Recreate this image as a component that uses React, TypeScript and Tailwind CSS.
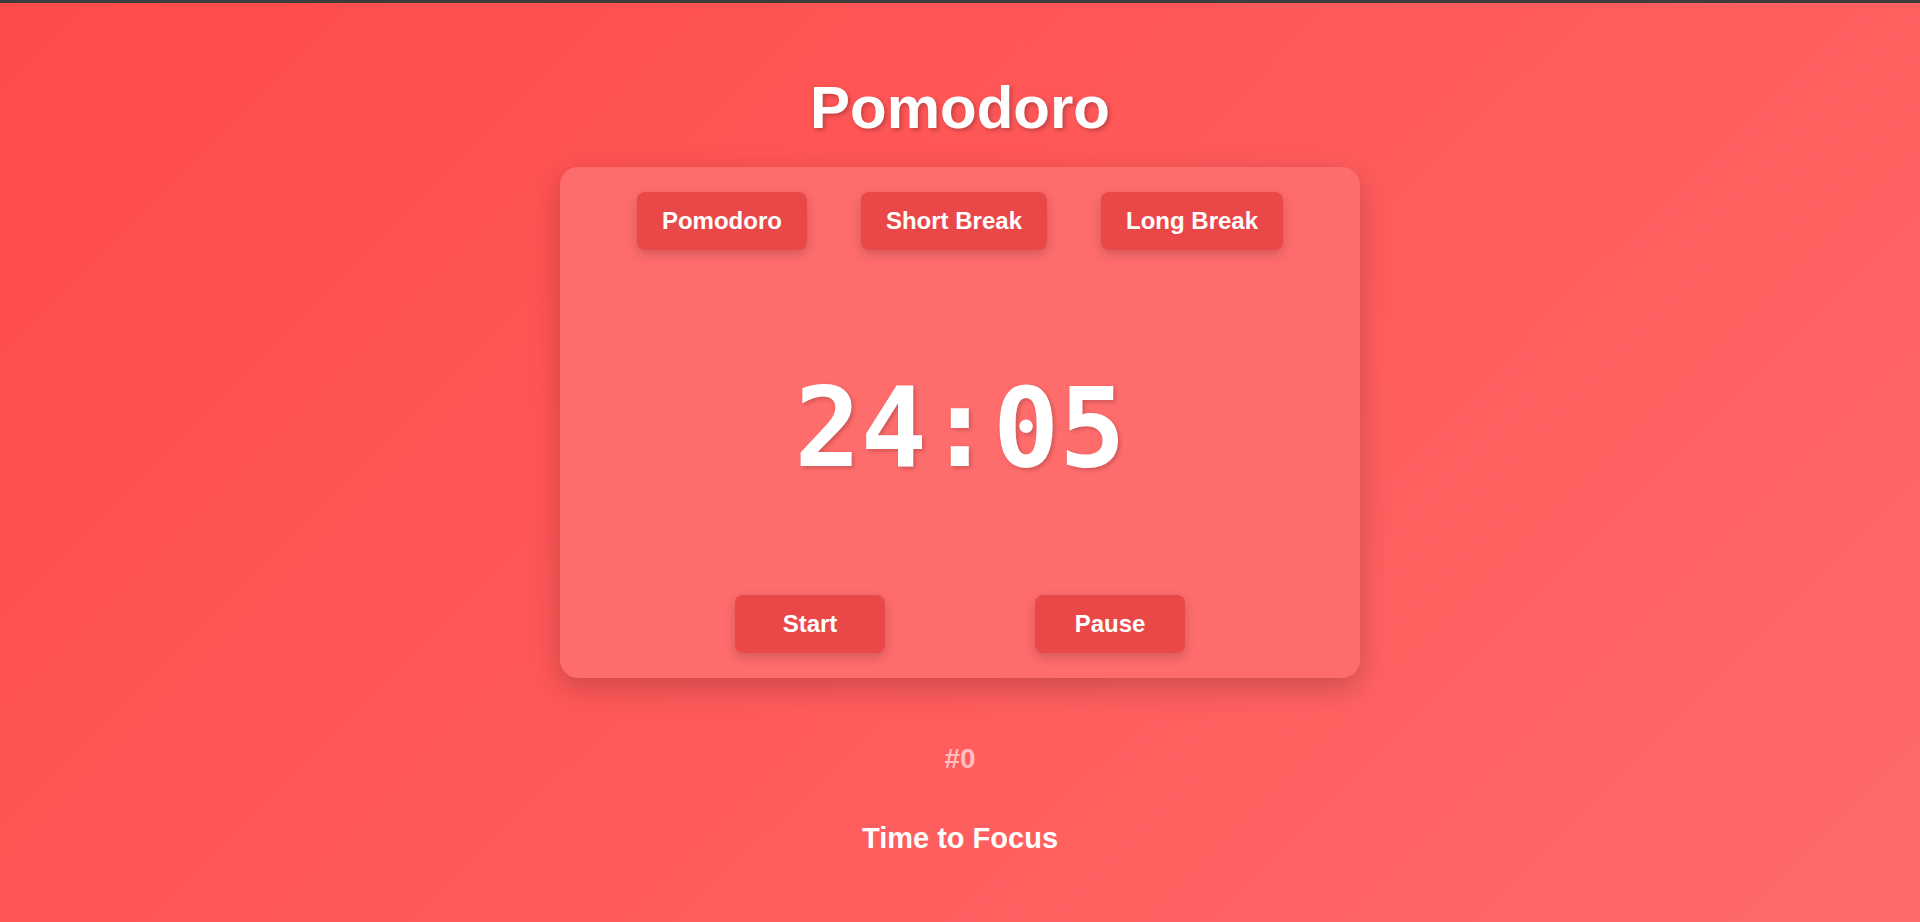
import { useEffect, useState } from 'react';

type Mode = 'pomodoro' | 'short' | 'long';

const MODES: { id: Mode; label: string; minutes: number }[] = [
  { id: 'pomodoro', label: 'Pomodoro', minutes: 25 },
  { id: 'short', label: 'Short Break', minutes: 5 },
  { id: 'long', label: 'Long Break', minutes: 15 },
];

const btn =
  'bg-[#ea4848] text-white font-bold text-[24px] leading-[28px] rounded-[8px] shadow-[0_4px_12px_rgba(0,0,0,0.18)] cursor-pointer';

function format(sec: number) {
  const m = Math.floor(sec / 60).toString().padStart(2, '0');
  const s = (sec % 60).toString().padStart(2, '0');
  return `${m}:${s}`;
}

export default function App() {
  const [mode, setMode] = useState<Mode>('pomodoro');
  const [left, setLeft] = useState(24 * 60 + 5);
  const [running, setRunning] = useState(false);
  const [count, setCount] = useState(0);

  useEffect(() => {
    if (!running) return;
    const t = setInterval(() => {
      setLeft((v) => {
        if (v <= 1) {
          setRunning(false);
          if (mode === 'pomodoro') setCount((c) => c + 1);
          return 0;
        }
        return v - 1;
      });
    }, 1000);
    return () => clearInterval(t);
  }, [running, mode]);

  const pick = (m: Mode) => {
    setMode(m);
    setRunning(false);
    setLeft(MODES.find((x) => x.id === m)!.minutes * 60);
  };

  return (
    <div className="min-h-screen flex flex-col bg-[linear-gradient(135deg,#ff4a4b_0%,#ff6a6a_100%)] font-['Liberation_Sans',Arial,sans-serif] text-white">
      <div className="h-[3px] bg-[#3d3d3d]" />

      <div className="flex flex-col items-center">
        <h1 className="mt-[70px] text-[60px] leading-[69px] font-bold [text-shadow:2px_2px_4px_rgba(0,0,0,0.25)]">
          Pomodoro
        </h1>

        {/* Card */}
        <div className="mt-[25px] w-[800px] h-[511px] p-[25px] flex flex-col rounded-[18px] bg-[#ff6c6c] shadow-[0_10px_30px_rgba(0,0,0,0.2)]">
          <div className="flex justify-center gap-[54px]">
            {MODES.map((m) => (
              <button key={m.id} onClick={() => pick(m.id)} className={`${btn} h-[58px] px-[25px]`}>
                {m.label}
              </button>
            ))}
          </div>

          <div className="flex-1 flex items-center justify-center pt-[11px]">
            <span className="font-['DejaVu_Sans_Mono',monospace] font-bold text-[110px] leading-none [text-shadow:2px_2px_4px_rgba(0,0,0,0.2)]">
              {format(left)}
            </span>
          </div>

          <div className="flex justify-center gap-[150px]">
            <button onClick={() => setRunning(true)} className={`${btn} w-[150px] h-[58px]`}>
              Start
            </button>
            <button onClick={() => setRunning(false)} className={`${btn} w-[150px] h-[58px]`}>
              Pause
            </button>
          </div>
        </div>

        <div className="mt-[65px] text-[28px] leading-[32px] font-bold text-white/60">#{count}</div>
        <div className="mt-[47px] text-[29px] leading-[33px] font-bold">
          {mode === 'pomodoro' ? 'Time to Focus' : 'Time for a Break'}
        </div>
      </div>
    </div>
  );
}
